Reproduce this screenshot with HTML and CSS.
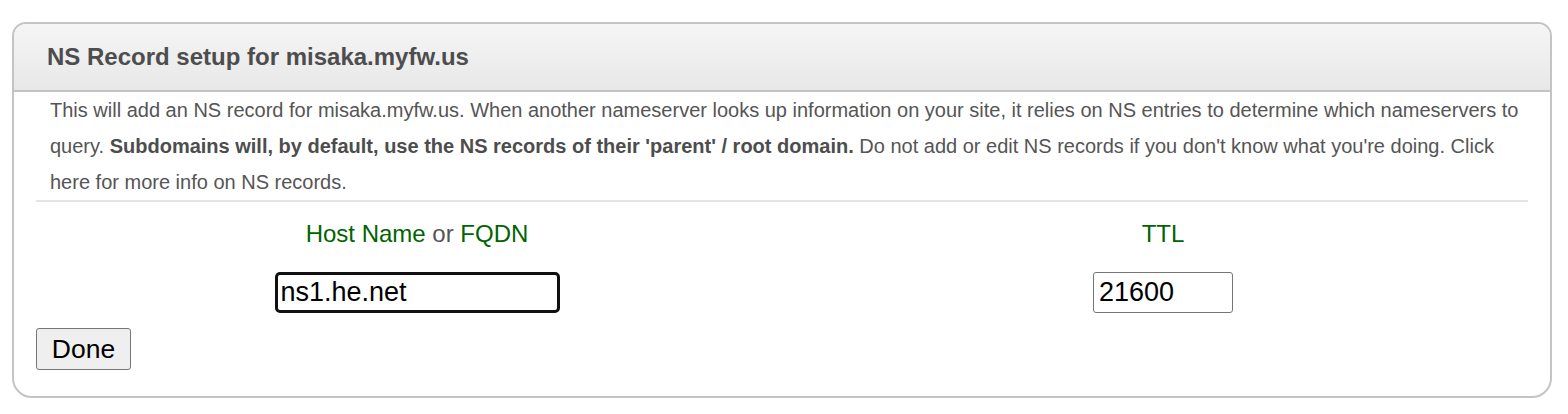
FILE: index.html
```html
<!DOCTYPE html>
<html>
<head>
<meta charset="utf-8">
<title>NS Record setup</title>
<link rel="stylesheet" href="styles.css">
</head>
<body>
<div class="panel">
  <div class="panel-head">
    <h2 class="panel-title">NS Record setup for misaka.myfw.us</h2>
  </div>
  <div class="panel-body">
    <p class="intro">This will add an NS record for misaka.myfw.us. When another nameserver looks up information on your site, it relies on NS entries to determine which nameservers to query. <b>Subdomains will, by default, use the NS records of their 'parent' / root domain.</b> Do not add or edit NS records if you don't know what you're doing. Click here for more info on NS records.</p>
    <div class="fields">
      <div class="label"><span class="green">Host Name</span> or <span class="green">FQDN</span></div>
      <div class="label"><span class="green">TTL</span></div>
      <div class="cell"><input class="input input-host" type="text" value="ns1.he.net"></div>
      <div class="cell"><input class="input input-ttl" type="text" value="21600"></div>
    </div>
    <button class="btn" type="button">Done</button>
  </div>
</div>
</body>
</html>
```

FILE: styles.css
```css
html, body {
  margin: 0;
  padding: 0;
  background: #ffffff;
}
body {
  font-family: "Liberation Sans", Arial, sans-serif;
  color: #555555;
  padding: 22px 16px 0 12px;
}
.panel {
  border: 2px solid #c4c4c4;
  border-radius: 14px 14px 20px 20px;
  overflow: hidden;
  background: #ffffff;
}
.panel-head {
  background: linear-gradient(#f5f5f5, #e8e8e8);
  border-bottom: 2px solid #c4c4c4;
  height: 68px;
  box-sizing: border-box;
  padding: 19px 0 0 33px;
}
.panel-title {
  margin: 0;
  font-size: 24px;
  font-weight: bold;
  line-height: 27px;
  color: #4d4d4d;
}
.panel-body {
  padding: 0 22px 26px 22px;
}
.intro {
  margin: 0;
  padding: 0 0 0 14px;
  font-size: 20px;
  line-height: 36px;
  color: #555555;
  border-bottom: 2px solid #e4e4e4;
}
.intro b {
  color: #4d4d4d;
}
.fields {
  display: grid;
  grid-template-columns: 762px 1fr;
  row-gap: 25px;
  padding-top: 18px;
}
.label {
  text-align: center;
  font-size: 24px;
  line-height: 27px;
  color: #555555;
}
.green {
  color: #006400;
}
.cell {
  display: flex;
  justify-content: center;
}
.input {
  box-sizing: border-box;
  height: 41px;
  font-family: "Liberation Sans", Arial, sans-serif;
  font-size: 27px;
  color: #000000;
  background: #ffffff;
  margin: 0;
  outline: none;
}
.input-host {
  width: 285px;
  border: 3px solid #101010;
  border-radius: 5px;
  padding: 0 3px;
}
.input-ttl {
  width: 140px;
  border: 1px solid #767676;
  border-radius: 3px;
  padding: 0 5px;
}
.btn {
  display: block;
  margin-top: 15px;
  width: 95px;
  height: 42px;
  box-sizing: border-box;
  font-family: "Liberation Sans", Arial, sans-serif;
  font-size: 26.5px;
  color: #000000;
  background: #efefef;
  border: 1px solid #767676;
  border-radius: 3px;
  padding: 0;
}
```
